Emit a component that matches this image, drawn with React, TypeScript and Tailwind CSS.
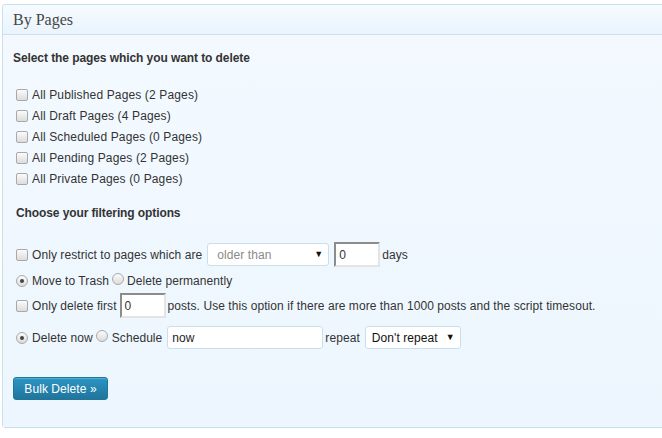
import React from "react";

const Check = () => (
  <span className="inline-block w-[12px] h-[12px] shrink-0 rounded-[2px] border border-[#a9a9a9] bg-gradient-to-b from-[#fbfbfb] to-[#dcdcdc]" />
);

const Radio = ({ checked }: { checked?: boolean }) => (
  <span className="inline-flex w-[12px] h-[12px] shrink-0 items-center justify-center rounded-full border border-[#a9a9a9] bg-gradient-to-b from-[#fbfbfb] to-[#dcdcdc]">
    {checked && <span className="block w-[4px] h-[4px] rounded-full bg-[#444]" />}
  </span>
);

const InsetInput = ({ w, value }: { w: string; value: string }) => (
  <span
    className={`inline-flex items-center h-[25px] ${w} bg-white border-2 border-t-[#8c8c8c] border-l-[#8c8c8c] border-r-[#e4e4e4] border-b-[#e4e4e4] pl-[3px] text-[#333]`}
  >
    {value}
  </span>
);

export default function App() {
  const pages = [
    "All Published Pages (2 Pages)",
    "All Draft Pages (4 Pages)",
    "All Scheduled Pages (0 Pages)",
    "All Pending Pages (2 Pages)",
    "All Private Pages (0 Pages)",
  ];
  return (
    <div className="w-[662px] h-[438px] overflow-hidden bg-white font-['Liberation_Sans',Arial,sans-serif] text-[12px] text-[#333] tracking-[0.07px]">
      <div className="ml-[2px] mt-[4px] w-[700px] rounded-[3px] border border-[#c9e1ef] bg-[#eff7fe]">
        <div className="h-[30px] flex items-center pl-[10px] border-b border-[#c9e1ef] bg-gradient-to-b from-[#f6fbff] to-[#e9f4fd] rounded-t-[3px]">
          <span className="font-['Liberation_Serif','Times_New_Roman',serif] text-[16px] text-[#464646] leading-none tracking-normal">
            By Pages
          </span>
        </div>
        <div className="pl-[10px] pt-[16px] pb-[27px] bg-gradient-to-b from-[#f3f9ff] to-[#edf6fe]">
          <div className="h-[14px] leading-[14px] font-bold text-[12px] tracking-[-0.08px]">
            Select the pages which you want to delete
          </div>
          <div className="mt-[19px] pl-[3px] tracking-[0.14px]">
            {pages.map((p) => (
              <div key={p} className="h-[21px] flex items-center">
                <Check />
                <span className="ml-[4px]">{p}</span>
              </div>
            ))}
          </div>
          <div className="mt-[17px] pl-[3px] h-[14px] leading-[14px] font-bold tracking-[-0.1px]">
            Choose your filtering options
          </div>
          <div className="pl-[3px]">
            <div className="mt-[22px] h-[25px] flex items-center">
              <Check />
              <span className="ml-[4px]">Only restrict to pages which are</span>
              <span className="ml-[5px] h-[23px] w-[122px] flex items-center justify-between rounded-[3px] border border-[#c9dfee] bg-white pl-[9px] pr-[5px] text-[#8a8a8a]">
                <span>older than</span>
                <span className="text-[#111] text-[9px]">▼</span>
              </span>
              <span className="ml-[5px]">
                <InsetInput w="w-[46px]" value="0" />
              </span>
              <span className="ml-[2px]">days</span>
            </div>
            <div className="mt-[3px] h-[21px] flex items-center">
              <Radio checked />
              <span className="ml-[4px]">Move to Trash</span>
              <span className="ml-[3px]">
                <Radio />
              </span>
              <span className="ml-[3px]">Delete permanently</span>
            </div>
            <div className="mt-[2px] h-[25px] flex items-center">
              <Check />
              <span className="ml-[4px]">Only delete first</span>
              <span className="ml-[3px]">
                <InsetInput w="w-[46px]" value="0" />
              </span>
              <span className="ml-[2px]">
                posts. Use this option if there are more than 1000 posts and the script timesout.
              </span>
            </div>
            <div className="mt-[8px] h-[23px] flex items-center">
              <Radio checked />
              <span className="ml-[4px]">Delete now</span>
              <span className="ml-[3px]">
                <Radio />
              </span>
              <span className="ml-[4px]">Schedule</span>
              <span className="ml-[5px] h-[23px] w-[156px] flex items-center rounded-[3px] border border-[#c9dfee] bg-white pl-[4px] text-[#222]">
                now
              </span>
              <span className="ml-[2px]">repeat</span>
              <span className="ml-[5px] h-[23px] w-[96px] flex items-center justify-between rounded-[3px] border border-[#c9dfee] bg-white pl-[6px] pr-[5px] text-[#111]">
                <span>Don't repeat</span>
                <span className="text-[9px]">▼</span>
              </span>
            </div>
          </div>
          <div className="mt-[28px]">
            <button className="h-[23px] w-[95px] rounded-[3px] border border-[#21759b] bg-gradient-to-b from-[#2a95c5] to-[#21759b] text-white text-[12px] shadow-[inset_0_1px_0_rgba(120,200,230,0.5)]">
              Bulk Delete »
            </button>
          </div>
        </div>
      </div>
    </div>
  );
}
